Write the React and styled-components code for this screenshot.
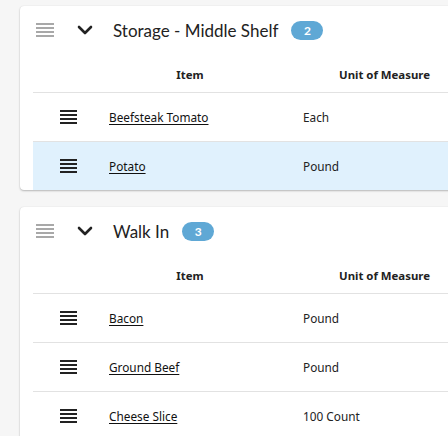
import React from 'react'
import styled, { createGlobalStyle } from 'styled-components'
import { ChevronDown } from 'lucide-react'

const Global = createGlobalStyle`
  html, body {
    margin: 0;
    background: #f6f6f6;
    overflow: hidden;
  }
  body {
    font-family: "Lato", "Noto Sans", sans-serif;
    color: #222;
  }
`

const Page = styled.div`
  display: flex;
  flex-direction: column;
  gap: 17px;
  padding: 6px 0 0 20px;
  width: 520px;
`

const Card = styled.section`
  background: #fff;
  border-radius: 4px;
  box-shadow: 0 1px 2px rgba(0, 0, 0, 0.25), 0 0 1px rgba(0, 0, 0, 0.12);
  padding-left: 13px;
`

const Header = styled.div`
  display: flex;
  align-items: center;
  height: 48px;
  padding-left: 3px;
`

const Chevron = styled.span`
  display: flex;
  width: 24px;
  margin: 0 16px 0 19px;
  color: #222;
`

const Title = styled.h2`
  margin: 0;
  font-size: 17px;
  font-weight: 400;
  color: #222;
`

const Badge = styled.span`
  display: inline-flex;
  align-items: center;
  justify-content: center;
  width: 32px;
  height: 19px;
  margin-left: 13px;
  border-radius: 10px;
  background: #5fa8d5;
  color: #fff;
  font-size: 12px;
  font-weight: 700;
`

const Row = styled.div`
  display: grid;
  grid-template-columns: 60px 194px 195px;
  align-items: center;
  height: ${p => (p.$head ? '38px' : '49px')};
  border-top: ${p => (p.$head ? 'none' : '1px solid #e2e2e2')};
  background: ${p => (p.$active ? '#e0f1fd' : 'transparent')};
  font-family: "Noto Sans", "Lato", sans-serif;
  font-size: 11.8px;
  box-sizing: border-box;
`

const HeadCell = styled.div`
  text-align: center;
  font-weight: 700;
  font-size: 11.4px;
  color: #222;
  padding-top: 2px;
`

const DragCell = styled.div`
  display: flex;
  padding-left: 27px;
`

const ItemLink = styled.a`
  padding-left: 16px;
  color: #111;
  text-decoration: underline;
  text-underline-offset: 2px;
  cursor: pointer;
`

const Cell = styled.div`
  padding-left: 16px;
  color: #222;
`

const Handle = ({ color = '#222', width = 17 }) => (
  <svg width={width} height="14" viewBox={`0 0 ${width} 14`}>
    {[0, 4, 8, 12].map(y => (
      <rect key={y} x="0" y={y} width={width} height="2" fill={color} />
    ))}
  </svg>
)

const groups = [
  {
    name: 'Storage - Middle Shelf',
    items: [
      { name: 'Beefsteak Tomato', unit: 'Each' },
      { name: 'Potato', unit: 'Pound', active: true },
    ],
  },
  {
    name: 'Walk In',
    items: [
      { name: 'Bacon', unit: 'Pound' },
      { name: 'Ground Beef', unit: 'Pound' },
      { name: 'Cheese Slice', unit: '100 Count' },
    ],
  },
]

export default function App() {
  return (
    <Page>
      <Global />
      {groups.map(g => (
        <Card key={g.name}>
          <Header>
            <Handle color="#a8a8a8" width={18} />
            <Chevron>
              <ChevronDown size={24} strokeWidth={2.6} />
            </Chevron>
            <Title>{g.name}</Title>
            <Badge>{g.items.length}</Badge>
          </Header>
          <Row $head>
            <div />
            <HeadCell>Item</HeadCell>
            <HeadCell>Unit of Measure</HeadCell>
          </Row>
          {g.items.map(it => (
            <Row key={it.name} $active={it.active}>
              <DragCell>
                <Handle />
              </DragCell>
              <div>
                <ItemLink>{it.name}</ItemLink>
              </div>
              <Cell>{it.unit}</Cell>
            </Row>
          ))}
        </Card>
      ))}
    </Page>
  )
}
